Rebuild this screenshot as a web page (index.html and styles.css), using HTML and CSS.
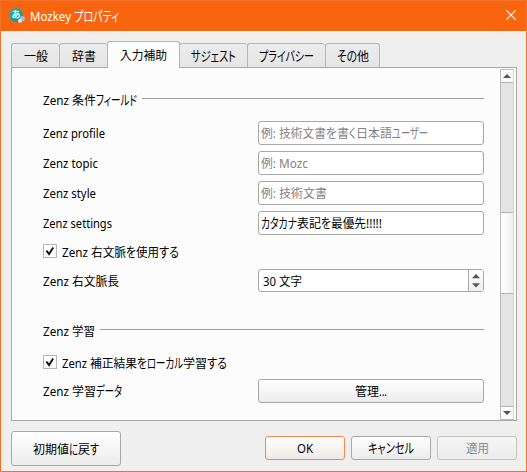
FILE: index.html
```html
<!DOCTYPE html>
<html lang="ja">
<head>
<meta charset="utf-8">
<title>Mozkey プロパティ</title>
<link rel="stylesheet" href="styles.css">
</head>
<body>
<div class="window">
  <header class="titlebar">
    <svg class="logo" width="17" height="16" viewBox="0 0 17 16"><defs><linearGradient id="g" x1="0" y1="0" x2="1" y2="1"><stop offset="0" stop-color="#35b09f"/><stop offset="1" stop-color="#128b91"/></linearGradient></defs><circle cx="7" cy="7" r="6.9" fill="url(#g)"/><text x="2.5" y="10.3" font-size="9" fill="#e9fffa" font-family="Noto Sans CJK JP" font-weight="700">あ</text><circle cx="13.4" cy="10.6" r="2.6" fill="#a5b8df"/><circle cx="11" cy="12.7" r="2" fill="#e3e9f1"/></svg>
    <span class="text title"><i data-w="44">Mozkey </i><i data-w="45">プロパティ</i></span>
    <svg class="close" width="10" height="10" viewBox="0 0 10 10"><path d="M.3.3l9.4 9.4M9.7.3L.3 9.7" stroke="#fff" stroke-width="1.1"/></svg>
  </header>
  <nav class="tabs">
    <div class="tab t48 text"><i data-w="24">一般</i></div>
    <div class="tab t48 text"><i data-w="24">辞書</i></div>
    <div class="tab active text"><i data-w="47">入力補助</i></div>
    <div class="tab t68 text"><i data-w="45">サジェスト</i></div>
    <div class="tab t78 text"><i data-w="55">プライバシー</i></div>
    <div class="tab t55 text"><i data-w="20">その</i><i data-w="12">他</i></div>
  </nav>
  <main class="panel">
    <div class="form">
      <div class="heading first text"><span><i data-w="29">Zenz </i><i data-w="24">条件</i><i data-w="41">フィールド</i></span><hr></div>
      <div class="row text"><span><i data-w="62">Zenz profile</i></span><div class="field hint"><i data-w="18">例: </i><i data-w="47">技術文書</i><i data-w="11">を</i><i data-w="12">書</i><i data-w="7">く</i><i data-w="36">日本語</i><i data-w="36">ユーザー</i></div></div>
      <div class="row text"><span><i data-w="55">Zenz topic</i></span><div class="field hint"><i data-w="18">例: </i><i data-w="29">Mozc</i></div></div>
      <div class="row text"><span><i data-w="53">Zenz style</i></span><div class="field hint"><i data-w="18">例: </i><i data-w="48">技術文書</i></div></div>
      <div class="row text"><span><i data-w="69">Zenz settings</i></span><div class="field"><i data-w="36">カタカナ</i><i data-w="24">表記</i><i data-w="10">を</i><i data-w="35">最優先</i><i data-w="16">!!!!!</i></div></div>
      <div class="check text"><svg width="14" height="14" viewBox="0 0 14 14"><rect x=".5" y=".5" width="13" height="13" fill="#fff" stroke="#b6b6b6"/><path d="M3.4 6.7L6 10 10.2 3.5" fill="none" stroke="#111" stroke-width="1.9"/></svg><span><i data-w="29">Zenz </i><i data-w="35">右文脈</i><i data-w="10">を</i><i data-w="23">使用</i><i data-w="20">する</i></span></div>
      <div class="row spinrow text"><span><i data-w="29">Zenz </i><i data-w="47">右文脈長</i></span><div class="field spin"><span><i data-w="16">30 </i><i data-w="23">文字</i></span><div class="steps"><svg width="14" height="21" viewBox="0 0 14 21"><path d="M3 8.2L7 4l4 4.2zM3 13.2L7 17.4l4-4.2z" fill="#555"/></svg></div></div></div>
      <div class="heading second text"><span><i data-w="29">Zenz </i><i data-w="23">学習</i></span><hr></div>
      <div class="check learning text"><svg width="14" height="14" viewBox="0 0 14 14"><rect x=".5" y=".5" width="13" height="13" fill="#fff" stroke="#b6b6b6"/><path d="M3.4 6.7L6 10 10.2 3.5" fill="none" stroke="#111" stroke-width="1.9"/></svg><span><i data-w="28">Zenz </i><i data-w="47">補正結果</i><i data-w="10">を</i><i data-w="36">ローカル</i><i data-w="24">学習</i><i data-w="20">する</i></span></div>
      <div class="row text"><span><i data-w="29">Zenz </i><i data-w="24">学習</i><i data-w="26">データ</i></span><button class="manage"><i data-w="24">管理</i><i data-w="8">...</i></button></div>
    </div>
    <div class="scrollbar">
      <div class="arrow"><svg width="12" height="12" viewBox="0 0 12 12"><path d="M2 8L6 4l4 4z" fill="#555"/></svg></div>
      <div class="above"></div><div class="thumb"></div><div class="below"></div>
      <div class="arrow"><svg width="12" height="12" viewBox="0 0 12 12"><path d="M2 4l4 4 4-4z" fill="#555"/></svg></div>
    </div>
  </main>
  <footer class="actions text">
    <button class="reset"><i data-w="36">初期値</i><i data-w="9">に</i><i data-w="12">戻</i><i data-w="9">す</i></button>
    <button class="ok"><i data-w="16">OK</i></button>
    <button><i data-w="46">キャンセル</i></button>
    <button class="disabled"><i data-w="23">適用</i></button>
  </footer>
</div>
<script src="script.js"></script>
</body>
</html>
```

FILE: styles.css
```css
* { box-sizing: border-box; }
body { margin: 0; overflow: hidden; }
.window { width: 527px; height: 472px; background: #efefef; border: 1px solid #f4712a; display: flex; flex-direction: column; }
.titlebar { height: 30px; flex: none; background: #f9650e; display: flex; align-items: center; padding: 0 10px 0 8px; }
.logo { flex: none; }
.text { font-family: "Noto Sans", "Noto Sans CJK JP", sans-serif; font-size: 12px; line-height: 18px; color: #000; white-space: pre; }
.titlebar .title { color: #fff; margin-left: 4px; padding-top: 1px; }
.close { margin-left: auto; margin-top: -2px; }
i { font-style: normal; display: inline-block; white-space: pre; vertical-align: top; height: 18px; }
i > b { font-weight: 400; display: inline-block; vertical-align: top; height: 18px; transform-origin: 0 50%; }
i > b.kana { font-size: 13.5px; font-feature-settings: "palt"; margin-top: -1px; }
.tabs { height: 36px; flex: none; display: flex; align-items: flex-end; padding-left: 10px; }
.tab { height: 24px; border: 1px solid #b5b5b5; border-right: 0; border-bottom: 0; border-radius: 3px 3px 0 0; background: linear-gradient(#ececec, #e5e5e5); display: flex; justify-content: center; padding-top: 4px; }
.tab:last-child { border-right: 1px solid #b5b5b5; }
.t48 { width: 48px; }
.t68 { width: 68px; }
.t78 { width: 78px; }
.t55 { width: 55px; }
.tab.active { width: 73px; margin-right: -1px; height: 27px; margin-bottom: -1px; border-right: 1px solid #b5b5b5; background: #fcfcfc; padding-top: 5px; position: relative; z-index: 1; }
.panel { height: 354px; flex: none; margin: 0 9px 0 10px; border: 1px solid #a8a8a8; background: #fcfcfc; display: flex; padding: 1px 2px 0 31px; }
.form { width: 441px; display: flex; flex-direction: column; flex: none; }
.heading { display: flex; height: 18px; gap: 5px; flex: none; }
.heading span { padding-top: 1px; }
.heading hr { flex: 1; margin: 7px 0 0; border: 0; height: 1px; background: #9b9b9b; }
.heading.first { margin: 22px 0 12px; }
.heading.second { margin: 30px 0 15px; }
.row { display: flex; justify-content: space-between; align-items: center; height: 24px; margin-bottom: 6px; flex: none; }
.row > span { padding-top: 2px; }
.field { width: 226px; height: 24px; border: 1px solid #a8a8a8; border-radius: 3px; background: #fff; display: flex; padding: 3px 0 0 2px; }
.field.hint { color: #828282; }
.check { display: flex; gap: 5px; align-items: flex-start; height: 14px; flex: none; margin-top: 3px; }
.row.spinrow { height: 23px; margin: 11px 0 0; }
.spin { height: 23px; justify-content: space-between; padding: 0 0 0 4px; overflow: hidden; }
.spin > span { padding-top: 3px; }
.steps { width: 15px; border-left: 1px solid #a8a8a8; background: linear-gradient(#fff, #eee); }
.steps svg { display: block; }
.learning { margin: 0 0 10px; }
button { font: inherit; color: inherit; width: 80px; height: 24px; padding: 0; border: 1px solid #a8a8a8; border-radius: 3px; background: linear-gradient(#fff, #ececec); display: flex; align-items: center; justify-content: center; }
.manage { width: 226px; padding-top: 1px; }
.scrollbar { width: 14px; height: 351px; margin-left: auto; display: flex; flex-direction: column; border: 1px solid #bdbdbd; border-right-color: #d3d3d3; background: #e4e4e4; }
.arrow { height: 13px; flex: none; background: #fbfbfb; border-bottom: 1px solid #b5b5b5; }
.arrow:last-child { border-bottom: 0; border-top: 1px solid #b5b5b5; }
.arrow svg { display: block; }
.above { height: 129px; }
.thumb { height: 82px; border: solid #b5b5b5; border-width: 1px 0; background: linear-gradient(90deg, #fff, #f0f0f0); }
.below { flex: 1; }
.actions { display: flex; gap: 6px; align-items: center; padding: 10px 9px 0 10px; }
.actions .reset { width: 110px; height: 35px; margin-right: auto; padding-top: 2px; }
.actions button:not(.reset) { margin-top: -1px; padding-top: 1px; }
.actions .ok { border-color: #f88a48; background: linear-gradient(#fff, #efe9e5); }
.actions .disabled { color: #8b8b8b; border-color: #c4c4c4; background: linear-gradient(#f5f5f5, #ececec); }
```

FILE: script.js
```js
// Condense each text run to its proportional UI width.
document.querySelectorAll('i[data-w]').forEach(run => {
  const inner = document.createElement('b');
  inner.textContent = run.textContent;
  if (/^[\u3040-\u30ff]+$/.test(inner.textContent)) inner.className = 'kana';
  run.textContent = '';
  run.appendChild(inner);
  const width = Number(run.dataset.w);
  const natural = inner.getBoundingClientRect().width;
  run.style.width = width + 'px';
  inner.style.transform = `scaleX(${width / natural})`;
});
```
